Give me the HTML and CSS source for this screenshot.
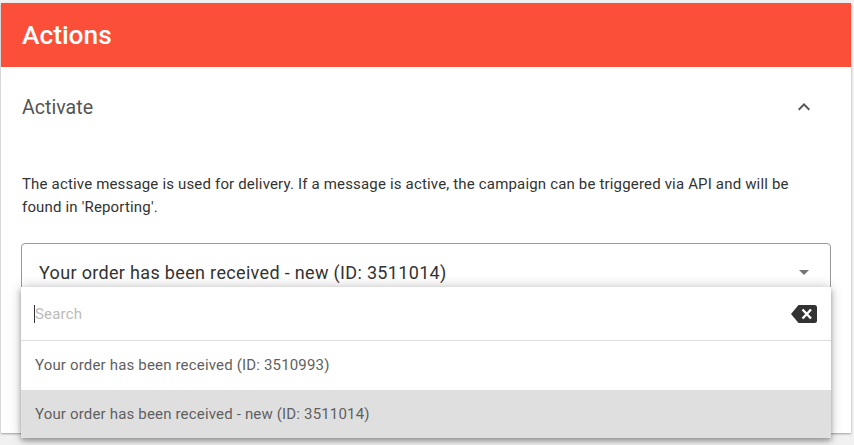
FILE: index.html
```html
<!DOCTYPE html>
<html lang="en">

<head>
    <meta charset="UTF-8">
    <title>Actions</title>
    <link rel="stylesheet" href="styles.css">
</head>

<body>

    <div class="card">
        <div class="card-header">Actions</div>

        <div class="section">
            <div class="section-title">
                <span>Activate</span>
                <svg class="chevron" viewBox="0 0 24 24" width="24" height="24">
                    <path d="M7.41 15.41 12 10.83l4.59 4.58L18 14l-6-6-6 6z" />
                </svg>
            </div>

            <p class="hint">The active message is used for delivery. If a message is active, the campaign can be
                triggered via API and will be found in 'Reporting'.</p>

            <div class="select">
                <span>Your order has been received - new (ID: 3511014)</span>
                <span class="caret"></span>
            </div>
        </div>

        <!-- Offenes Dropdown -->
        <div class="dropdown">
            <div class="search">
                <span class="cursor"></span>
                <span class="placeholder">Search</span>
                <svg class="clear" viewBox="0 0 26 18" width="26" height="18">
                    <path d="M7.5 0H23.5A2.5 2.5 0 0 1 26 2.5V15.5A2.5 2.5 0 0 1 23.5 18H7.5L0 9Z" fill="#333" />
                    <path d="M11.5 4.5 20 13.5M20 4.5 11.5 13.5" stroke="#fff" stroke-width="2.4" fill="none" />
                </svg>
            </div>
            <div class="option">Your order has been received (ID: 3510993)</div>
            <div class="option selected">Your order has been received - new (ID: 3511014)</div>
        </div>
    </div>

</body>

</html>
```

FILE: styles.css
```css
html,
body {
    height: 100%;
}

body {
    margin: 0;
    padding: 3px 3px 0 1px;
    box-sizing: border-box;
    background-color: #f1f1f1;
    font-family: Roboto, "Liberation Sans", sans-serif;
    overflow: hidden;
}

.card {
    position: relative;
    height: 430px;
    background-color: #fff;
    box-shadow: 0 1px 2px rgba(0, 0, 0, 0.35);
}

.card-header {
    height: 64px;
    padding-left: 21px;
    background-color: #fb4f3a;
    color: #fff;
    font-size: 26.3px;
    font-weight: 500;
    line-height: 64px;
}

.section {
    padding: 0 20px;
}

.section-title {
    display: flex;
    justify-content: space-between;
    align-items: center;
    height: 80px;
    padding-right: 15px;
    color: #555;
    font-size: 19.6px;
}

.section-title span {
    margin-left: 1px;
}

.chevron {
    fill: #555;
}

.hint {
    margin: 0 0 0 1px;
    padding: 26px 20px 0 0;
    color: #333;
    font-size: 15px;
    letter-spacing: 0.17px;
    line-height: 23px;
}

.select {
    display: flex;
    justify-content: space-between;
    height: 60px;
    box-sizing: border-box;
    margin-top: 24px;
    padding: 18px 21px 0 17px;
    border: 1px solid #999;
    border-radius: 4px;
    color: #333;
    font-size: 18px;
    letter-spacing: 0.33px;
    line-height: 22px;
}

.caret {
    width: 0;
    height: 0;
    margin-top: 8px;
    border-left: 5px solid transparent;
    border-right: 5px solid transparent;
    border-top: 5px solid #757575;
}

.dropdown {
    position: absolute;
    top: 284px;
    left: 20px;
    width: 810px;
    background-color: #fff;
    box-shadow: 0 3px 5px rgba(0, 0, 0, 0.3), 0 0 12px rgba(0, 0, 0, 0.22);
    color: #5f5f5f;
    font-size: 15px;
    letter-spacing: 0.17px;
}

.search {
    display: flex;
    align-items: center;
    height: 53px;
    padding: 0 14px 0 13px;
    border-bottom: 1px solid #ddd;
}

.cursor {
    width: 1px;
    height: 18px;
    background-color: #333;
}

.placeholder {
    flex: 1;
    color: #bbb;
}

.option {
    height: 49px;
    padding-left: 14px;
    line-height: 48px;
}

.selected {
    height: 48px;
    background-color: #dfdfdf;
}
```
